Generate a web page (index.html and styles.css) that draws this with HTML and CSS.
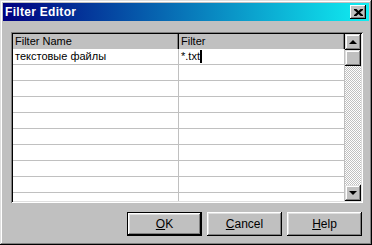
FILE: index.html
```html
<!DOCTYPE html>
<html lang="ru">
<head>
  <meta charset="UTF-8" />
  <title>Filter Editor</title>
  <link rel="stylesheet" href="styles.css">
</head>
<body>
  <div class="window">
    <div class="titlebar">
      <span class="title">Filter Editor</span>
      <div class="close">
        <svg width="9" height="7" viewBox="0 0 9 7"><path d="M0 0h2.5l2 2 2-2H9v1L6 3.5 9 6v1H6.5l-2-2-2 2H0V6l3-2.5L0 1z" fill="#000"/></svg>
      </div>
    </div>

    <div class="content">
      <div class="grid">
        <div class="cells">
          <div class="row head">
            <div class="cell">Filter Name</div>
            <div class="cell">Filter</div>
          </div>
          <div class="row">
            <div class="cell">текстовые файлы</div>
            <div class="cell">*.txt<span class="caret"></span></div>
          </div>
          <div class="row"><div class="cell"></div><div class="cell"></div></div>
          <div class="row"><div class="cell"></div><div class="cell"></div></div>
          <div class="row"><div class="cell"></div><div class="cell"></div></div>
          <div class="row"><div class="cell"></div><div class="cell"></div></div>
          <div class="row"><div class="cell"></div><div class="cell"></div></div>
          <div class="row"><div class="cell"></div><div class="cell"></div></div>
          <div class="row"><div class="cell"></div><div class="cell"></div></div>
          <div class="row"><div class="cell"></div><div class="cell"></div></div>
          <div class="row"><div class="cell"></div><div class="cell"></div></div>
        </div>
        <div class="scrollbar">
          <div class="sb-btn"><span class="arrow-up"></span></div>
          <div class="sb-thumb"></div>
          <div class="sb-track"></div>
          <div class="sb-btn"><span class="arrow-down"></span></div>
        </div>
      </div>

      <div class="buttons">
        <div class="btn default"><u>O</u>K</div>
        <div class="btn"><u>C</u>ancel</div>
        <div class="btn"><u>H</u>elp</div>
      </div>
    </div>
  </div>
</body>
</html>
```

FILE: styles.css
```css
body {
  margin: 0;
  font-family: "Liberation Sans", Arial, sans-serif;
  font-size: 11px;
  color: #000;
  background: #c0c0c0;
}
.window {
  width: 372px;
  height: 245px;
  box-sizing: border-box;
  padding: 3px;
  background: #c0c0c0;
  box-shadow: inset -1px -1px #000, inset 1px 1px #dfdfdf, inset -2px -2px #808080, inset 2px 2px #fff;
}
.titlebar {
  height: 18px;
  display: flex;
  align-items: center;
  justify-content: space-between;
  padding: 0 3px 0 2px;
  background: linear-gradient(to right, #000080, #10eef2);
}
.title {
  color: #fff;
  font-weight: bold;
  font-size: 12px;
  letter-spacing: 0.3px;
}
.close {
  width: 16px;
  height: 14px;
  box-sizing: border-box;
  display: flex;
  align-items: center;
  justify-content: center;
  background: #c0c0c0;
  box-shadow: inset -1px -1px #000, inset 1px 1px #fff, inset -2px -2px #808080;
}
.content {
  padding: 11px 0 0 8px;
}
.grid {
  width: 352px;
  height: 171px;
  box-sizing: border-box;
  padding: 2px;
  display: flex;
  background: #fff;
  box-shadow: inset 1px 1px #808080, inset -1px -1px #fff, inset 2px 2px #000, inset -2px -2px #dfdfdf;
}
.cells {
  flex: 1;
  overflow: hidden;
}
.row {
  display: flex;
  height: 16px;
  box-sizing: border-box;
  border-bottom: 1px solid #c0c0c0;
}
.cell {
  width: 166px;
  box-sizing: border-box;
  border-right: 1px solid #c0c0c0;
  padding-left: 2px;
  line-height: 15px;
  white-space: nowrap;
}
.row.head {
  height: 15px;
  border-bottom: none;
  background: #c0c0c0;
}
.row.head .cell {
  line-height: 14px;
  border-right: 1px solid #000;
  box-shadow: inset -1px 0 #808080;
}
.caret {
  display: inline-block;
  width: 2px;
  height: 13px;
  vertical-align: -3px;
  background: #000;
}
.scrollbar {
  width: 16px;
  display: flex;
  flex-direction: column;
}
.sb-btn, .sb-thumb {
  height: 16px;
  flex: none;
  background: #c0c0c0;
  display: flex;
  align-items: center;
  justify-content: center;
  box-shadow: inset -1px -1px #000, inset 1px 1px #dfdfdf, inset -2px -2px #808080, inset 2px 2px #fff;
}
.sb-track {
  flex: 1;
  background: repeating-conic-gradient(#c0c0c0 0 25%, #fff 0 50%) 0 0 / 2px 2px;
}
.arrow-up, .arrow-down {
  width: 0;
  height: 0;
  border-left: 4px solid transparent;
  border-right: 4px solid transparent;
}
.arrow-up {
  border-bottom: 4px solid #000;
  margin-top: -1px;
}
.arrow-down {
  border-top: 4px solid #000;
}
.buttons {
  width: 352px;
  display: flex;
  justify-content: flex-end;
  gap: 5px;
  padding-top: 9px;
  padding-right: 1px;
  box-sizing: border-box;
}
.btn {
  width: 75px;
  height: 24px;
  box-sizing: border-box;
  display: flex;
  align-items: center;
  justify-content: center;
  background: #c0c0c0;
  font-size: 12px;
  box-shadow: inset -1px -1px #000, inset 1px 1px #fff, inset -2px -2px #808080, inset 2px 2px #dfdfdf;
}
.btn.default {
  border: 1px solid #000;
}
```
